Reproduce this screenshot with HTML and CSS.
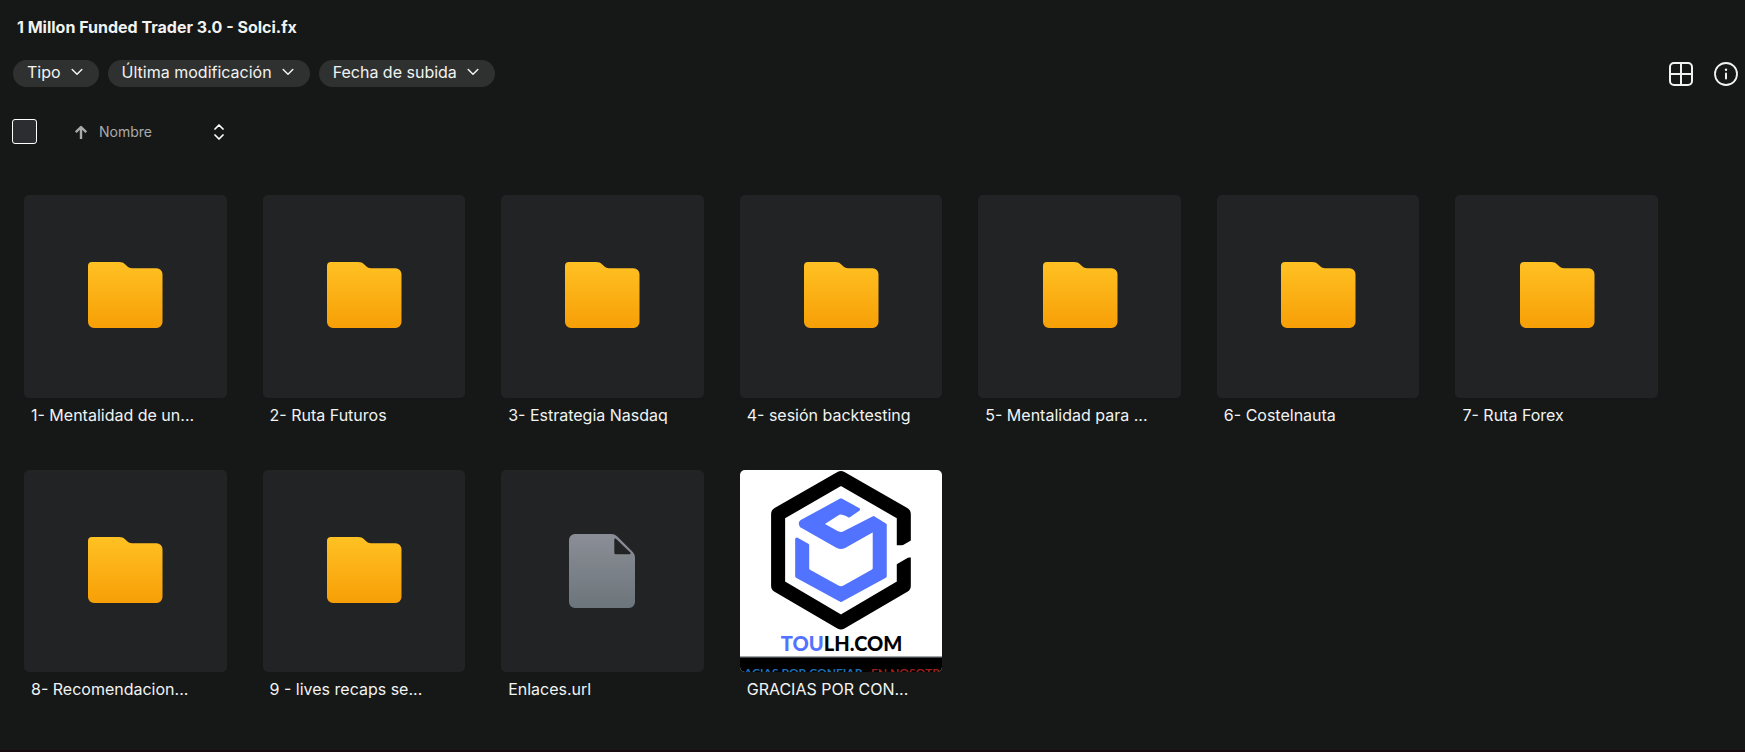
FILE: index.html
```html
<!DOCTYPE html>
<html lang="es">
<head>
<meta charset="utf-8">
<title>1 Millon Funded Trader 3.0 - Solci.fx</title>
<link rel="stylesheet" href="styles.css">
</head>
<body>
<svg class="defs" aria-hidden="true">
  <defs>
    <linearGradient id="folder-fill" x1="0" y1="0" x2="0" y2="1"><stop offset="0" stop-color="#ffc123"/><stop offset="1" stop-color="#f79f06"/></linearGradient>
    <linearGradient id="file-fill" x1="0" y1="0" x2="0" y2="1"><stop offset="0" stop-color="#8b8e96"/><stop offset="1" stop-color="#6c757b"/></linearGradient>
    <symbol id="folder" viewBox="0 0 96 96"><path fill="url(#folder-fill)" d="M11 18a4 4 0 0 1 4-4h27c3 0 4.500.8 6 2.200l2.500 2.300c1.300 1.200 2.500 1.700 4.500 1.700h24.500a6 6 0 0 1 6 6V74a6 6 0 0 1-6 6H17a6 6 0 0 1-6-6z"/></symbol>
    <symbol id="file" viewBox="0 0 96 96"><path fill="url(#file-fill)" fill-rule="evenodd" d="M21 11h36c2.500 0 4.500.8 6.300 2.500L78 28.200c2 2 3 4 3 6.800v44a6 6 0 0 1-6 6H21a6 6 0 0 1-6-6V17a6 6 0 0 1 6-6zM60.300 16.500v13.300a1.500 1.500 0 0 0 1.500 1.500H75.500a1 1 0 0 0 .8-1.700L62 15.800a1 1 0 0 0-1.700.7z"/></symbol>
    <symbol id="chevron" viewBox="0 0 12 8"><path fill="none" stroke="currentColor" stroke-width="1.500" stroke-linecap="round" stroke-linejoin="round" d="M1.200 1.500 6 6.300l4.800-4.800"/></symbol>
  </defs>
</svg>
<header class="header">
  <h1 class="title">1 Millon Funded Trader 3.0 - Solci.fx</h1>
</header>
<div class="toolbar">
  <div class="filters">
    <button class="chip" type="button">Tipo<svg class="chip-icon"><use href="#chevron"/></svg></button>
    <button class="chip" type="button">Última modificación<svg class="chip-icon"><use href="#chevron"/></svg></button>
    <button class="chip" type="button">Fecha de subida<svg class="chip-icon"><use href="#chevron"/></svg></button>
  </div>
  <div class="actions">
    <button class="icon-button" type="button" aria-label="Cuadrícula"><svg viewBox="0 0 24 24"><path fill="none" stroke="currentColor" stroke-width="2" d="M5 1h14a4 4 0 0 1 4 4v14a4 4 0 0 1-4 4H5a4 4 0 0 1-4-4V5a4 4 0 0 1 4-4zM12 1v22M1 12h22"/></svg></button>
    <button class="icon-button" type="button" aria-label="Información"><svg viewBox="0 0 24 24"><circle cx="12" cy="12" r="11" fill="none" stroke="currentColor" stroke-width="1.800"/><path fill="none" stroke="currentColor" stroke-width="2" stroke-linecap="round" d="M12 11.500v5"/><circle cx="12" cy="7.700" r="1.200" fill="currentColor"/></svg></button>
  </div>
</div>
<div class="sortbar">
  <input class="select-all" type="checkbox" aria-label="Seleccionar todo">
  <button class="sort" type="button"><svg class="sort-arrow" viewBox="0 0 12 14"><path fill="none" stroke="currentColor" stroke-width="2.400" stroke-linejoin="round" d="M6 14V2M.8 7.200 6 2l5.200 5.200"/></svg><span class="sort-label">Nombre</span><svg class="sort-toggle" viewBox="0 0 10 16"><path fill="none" stroke="currentColor" stroke-width="1.700" stroke-linecap="round" stroke-linejoin="round" d="M1 5l4-4 4 4M1 11l4 4 4-4"/></svg></button>
</div>
<main class="grid">
  <figure class="item"><div class="tile"><svg class="tile-icon"><use href="#folder"/></svg></div><figcaption class="name">1- Mentalidad de un...</figcaption></figure>
  <figure class="item"><div class="tile"><svg class="tile-icon"><use href="#folder"/></svg></div><figcaption class="name">2- Ruta Futuros</figcaption></figure>
  <figure class="item"><div class="tile"><svg class="tile-icon"><use href="#folder"/></svg></div><figcaption class="name">3- Estrategia Nasdaq</figcaption></figure>
  <figure class="item"><div class="tile"><svg class="tile-icon"><use href="#folder"/></svg></div><figcaption class="name">4- sesión backtesting</figcaption></figure>
  <figure class="item"><div class="tile"><svg class="tile-icon"><use href="#folder"/></svg></div><figcaption class="name">5- Mentalidad para ...</figcaption></figure>
  <figure class="item"><div class="tile"><svg class="tile-icon"><use href="#folder"/></svg></div><figcaption class="name">6- Costelnauta</figcaption></figure>
  <figure class="item"><div class="tile"><svg class="tile-icon"><use href="#folder"/></svg></div><figcaption class="name">7- Ruta Forex</figcaption></figure>
  <figure class="item"><div class="tile"><svg class="tile-icon"><use href="#folder"/></svg></div><figcaption class="name">8- Recomendacion...</figcaption></figure>
  <figure class="item"><div class="tile"><svg class="tile-icon"><use href="#folder"/></svg></div><figcaption class="name">9 - lives recaps se...</figcaption></figure>
  <figure class="item"><div class="tile"><svg class="tile-icon"><use href="#file"/></svg></div><figcaption class="name">Enlaces.url</figcaption></figure>
  <figure class="item"><div class="tile">
    <svg class="thumb" viewBox="0 0 606 606">
      <rect width="606" height="606" fill="#fff"/>
      <path fill="none" stroke="#000" stroke-width="42" stroke-linejoin="round" d="M490 225V132L302 24 114 132V346L302 456 490 346V262"/>
      <path fill="#fff" d="M465 238 515 209V255L465 284z"/>
      <path fill="#5273ff" stroke="#5273ff" stroke-width="10" stroke-linejoin="round" d="M302 90 354 118 326 137Q302 124 292 131L250 158Q248 162 252 166L292 188Q302 193 312 188L400 143 434 164V318L302 390 170 318V207L202 225V296Q203 300 207 303L292 350Q302 356 312 350L396 303Q402 300 402 294V178L312 229Q302 234 292 229L184 168Q178 160 184 154z"/>
      <text class="logo-text" x="304" y="541" text-anchor="middle"><tspan fill="#5273ff">TOU</tspan><tspan fill="#000">LH.COM</tspan></text>
      <rect y="560" width="606" height="46" fill="#000"/>
      <rect y="557" width="606" height="3" fill="#8b9194"/>
      <text class="banner-text" x="12" y="620" fill="#1c71b8">ACIAS POR CONFIAR</text>
      <text class="banner-text" x="598" y="620" text-anchor="end" fill="#9c201c">EN NOSOTR</text>
    </svg></div><figcaption class="name">GRACIAS POR CON...</figcaption></figure>
</main>
</body>
</html>
```
FILE: styles.css
```css
* { box-sizing: border-box; }
body {
  margin: 0;
  min-height: 100vh;
  background: #161817;
  border-bottom: 2px solid #150b10;
  color: #f1f3f2;
  font: 16px/24px Inter, "Liberation Sans", sans-serif;
}
.defs { position: absolute; width: 0; height: 0; }
button {
  margin: 0;
  padding: 0;
  border: 0;
  background: none;
  color: inherit;
  font: inherit;
  cursor: pointer;
}
svg { display: block; }
.header { padding: 15px 17px 0; }
.title { margin: 0; font-size: 16px; line-height: 24px; font-weight: 700; }
.toolbar {
  display: flex;
  align-items: flex-start;
  justify-content: space-between;
  padding: 21px 7px 0 13px;
}
.filters { display: flex; gap: 9px; }
.chip {
  display: flex;
  align-items: center;
  gap: 10px;
  height: 27px;
  padding: 0 16px 3px 14px;
  border-radius: 14px;
  background: #2f3130;
}
.chip-icon { width: 12px; height: 8px; }
.actions { display: flex; gap: 21px; padding-top: 2px; }
.icon-button svg { width: 24px; height: 24px; }
.sortbar { display: flex; align-items: center; gap: 38px; padding: 32px 12px 0; }
.select-all {
  appearance: none;
  width: 25px;
  height: 25px;
  margin: 0;
  border: 1px solid #fff;
  border-radius: 3px;
  background: #2c2d30;
}
.sort { display: flex; align-items: center; color: #a9abab; font-size: 14px; line-height: 20px; }
.sort-arrow { width: 12px; height: 14px; margin-right: 12px; }
.sort-label { width: 115px; text-align: left; }
.sort-toggle { width: 10px; height: 16px; color: #fff; }
.grid {
  display: grid;
  grid-template-columns: repeat(7, 1fr);
  gap: 36px;
  padding: 51px 87px 36px 24px;
}
.item { margin: 0; min-width: 0; }
.tile {
  display: flex;
  align-items: center;
  justify-content: center;
  aspect-ratio: 1;
  overflow: hidden;
  border-radius: 5px;
  background: #222325;
}
.tile-icon { width: 96px; height: 96px; }
.thumb { width: 100%; height: 100%; }
.name { padding: 5px 7px 7px; white-space: nowrap; overflow: hidden; }
.logo-text { font: 900 60px Lato, sans-serif; }
.banner-text { font: 700 36px Lato, sans-serif; }
```
